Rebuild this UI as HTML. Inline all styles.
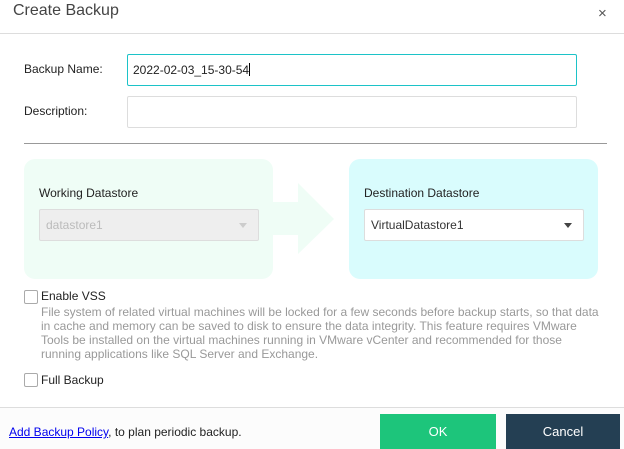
<!DOCTYPE html>
<html><head><style>
*{box-sizing:border-box;margin:0;padding:0}
body{width:624px;height:449px;overflow:hidden;background:#fff;font-family:"Liberation Sans",sans-serif;font-size:12px;color:#222;position:relative}
.a{position:absolute}
.inp{position:absolute;left:127px;width:450px;border:1px solid #ddd;border-radius:2px;background:#fff}
.panel{position:absolute;top:159px;width:249px;height:120px;border-radius:11px}
.sel{position:absolute;top:209px;width:220px;height:32px;border:1px solid #ddd;border-radius:2px;padding:8px 6px;font-size:12px}
.cb{position:absolute;width:14px;height:14px;border:1px solid #aaa;border-radius:2px;background:#fff}
.tri{position:absolute;right:11px;top:13px;width:0;height:0;border-left:4px solid transparent;border-right:4px solid transparent}
</style></head><body>
<div class="a" style="left:13px;top:2px;font-size:16px;color:#444">Create Backup</div>
<div class="a" style="left:598px;top:5px;font-size:15px;color:#555">×</div>
<div class="a" style="left:0;top:33px;width:624px;height:1px;background:#ddd"></div>

<div class="a" style="left:24px;top:62px">Backup Name:</div>
<div class="inp" style="top:54px;height:32px;border-color:#1cc3c8;padding:8px 5px">2022-02-03_15-30-54<span style="display:inline-block;width:1px;height:13px;background:#000;vertical-align:-2px"></span></div>
<div class="a" style="left:24px;top:104px">Description:</div>
<div class="inp" style="top:96px;height:32px"></div>
<div class="a" style="left:24px;top:143px;width:583px;height:1px;background:#999"></div>

<div class="panel" style="left:24px;background:#effdf6"></div>
<svg class="a" style="left:228px;top:183px" width="110" height="72"><polygon points="45,19 70,19 70,0 106,36 70,71 70,52 45,52" fill="#effdf6"/></svg>
<div class="panel" style="left:349px;background:#d9fcfd"></div>
<div class="a" style="left:39px;top:186px">Working Datastore</div>
<div class="sel" style="left:39px;background:#eee;color:#bbb">datastore1<span class="tri" style="border-top:5px solid #ccc"></span></div>
<div class="a" style="left:364px;top:186px">Destination Datastore</div>
<div class="sel" style="left:364px;background:#fff;color:#333">VirtualDatastore1<span class="tri" style="border-top:5px solid #444"></span></div>

<div class="cb" style="left:24px;top:290px"></div>
<div class="a" style="left:41px;top:289px">Enable VSS</div>
<div class="a" style="left:41px;top:305px;width:563px;line-height:14px;color:#999">File system of related virtual machines will be locked for a few seconds before backup starts, so that data in cache and memory can be saved to disk to ensure the data integrity. This feature requires VMware Tools be installed on the virtual machines running in VMware vCenter and recommended for those running applications like SQL Server and Exchange.</div>
<div class="cb" style="left:24px;top:373px"></div>
<div class="a" style="left:41px;top:373px">Full Backup</div>

<div class="a" style="left:0;top:407px;width:624px;height:42px;background:#fcfcfc;border-top:1px solid #ddd"></div>
<div class="a" style="left:9px;top:425px"><span style="color:#00e;text-decoration:underline">Add Backup Policy</span>, to plan periodic backup.</div>
<div class="a" style="left:380px;top:414px;width:116px;height:35px;background:#1dc57b;color:#fff;font-size:13px;text-align:center;line-height:35px">OK</div>
<div class="a" style="left:506px;top:414px;width:114px;height:35px;background:#243f53;color:#fff;font-size:13px;text-align:center;line-height:35px">Cancel</div>
</body></html>
